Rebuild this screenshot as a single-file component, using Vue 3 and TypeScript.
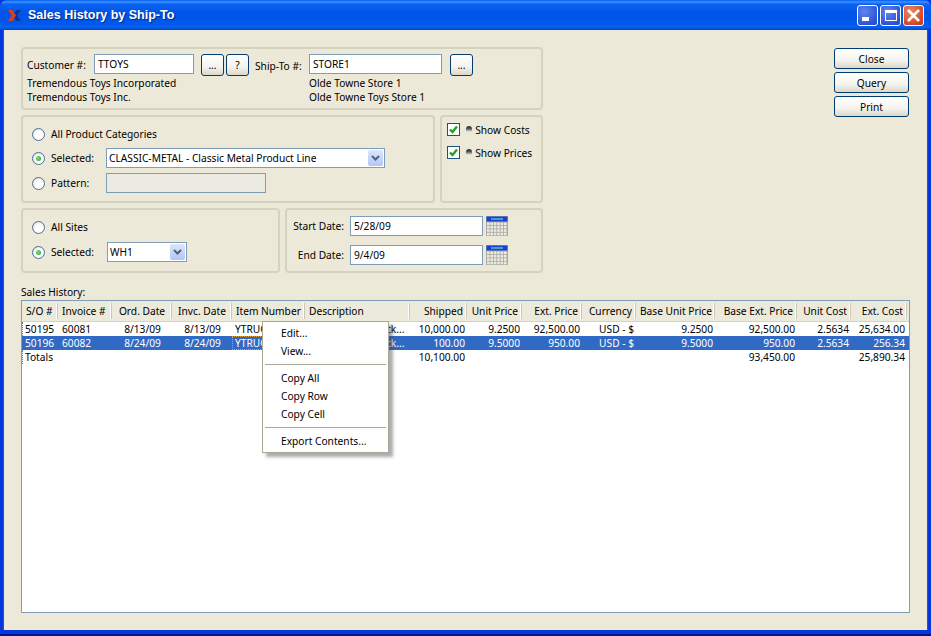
<script setup lang="ts">
interface Col { label: string; width: number; align: 'left' | 'right' | 'center' }
const cols: Col[] = [
  { label: 'S/O #', width: 36, align: 'left' },
  { label: 'Invoice #', width: 54, align: 'left' },
  { label: 'Ord. Date', width: 60, align: 'center' },
  { label: 'Invc. Date', width: 60, align: 'center' },
  { label: 'Item Number', width: 73, align: 'left' },
  { label: 'Description', width: 105, align: 'left' },
  { label: 'Shipped', width: 57, align: 'right' },
  { label: 'Unit Price', width: 55, align: 'right' },
  { label: 'Ext. Price', width: 60, align: 'right' },
  { label: 'Currency', width: 54, align: 'right' },
  { label: 'Base Unit Price', width: 79, align: 'right' },
  { label: 'Base Ext. Price', width: 82, align: 'right' },
  { label: 'Unit Cost', width: 54, align: 'right' },
  { label: 'Ext. Cost', width: 56, align: 'right' },
]
const desc = 'Tough Metal Truck...'
const rows: { cells: string[]; selected: boolean }[] = [
  { selected: false, cells: ['50195', '60081', '8/13/09', '8/13/09', 'YTRUCK1', desc, '10,000.00', '9.2500', '92,500.00', 'USD - $', '9.2500', '92,500.00', '2.5634', '25,634.00'] },
  { selected: true, cells: ['50196', '60082', '8/24/09', '8/24/09', 'YTRUCK1', desc, '100.00', '9.5000', '950.00', 'USD - $', '9.5000', '950.00', '2.5634', '256.34'] },
  { selected: false, cells: ['Totals', '', '', '', '', '', '10,100.00', '', '', '', '', '93,450.00', '', '25,890.34'] },
]
const gridColumns = cols.map((c) => c.width + 'px').join(' ')
const calCells: { x: number; y: number }[] = []
for (let r = 0; r < 4; r++) for (let c = 0; c < 6; c++) calCells.push({ x: 1 + c * 3.4, y: 6.500 + r * 3.4 })
</script>

<template>
  <div class="window">
    <header class="titlebar">
      <svg class="logo" width="13" height="11" viewBox="0 0 13 11">
        <path d="M13 0H8.500L6 3.500 7.800 5.500 6 7.500 8.500 11H13L9 5.500z" fill="#0f2f9a" />
        <path d="M0 0h4.500L8 5.500 4.500 11H0l3.500-5.500z" fill="#d8401c" />
      </svg>
      <span class="title">Sales History by Ship-To</span>
      <div class="winbtns">
        <span class="wb wb-blue">
          <svg width="19" height="19" viewBox="0 0 19 19"><rect x="4" y="11" width="7" height="4" fill="#fff" /></svg>
        </span>
        <span class="wb wb-blue">
          <svg width="19" height="19" viewBox="0 0 19 19"><rect x="4.500" y="4.500" width="11" height="10" fill="none" stroke="#fff" /><rect x="4" y="4" width="12" height="3" fill="#fff" /></svg>
        </span>
        <span class="wb wb-red">
          <svg width="19" height="19" viewBox="0 0 19 19"><path d="M4 4l11 11M15 4L4 15" stroke="#fff" stroke-width="2.600" /></svg>
        </span>
      </div>
    </header>

    <main class="client">
      <div class="top">
        <div class="forms">
          <section class="group customer">
            <div class="cust-col">
              <div class="cust-row">
                <label class="lbl">Customer #:</label>
                <span class="input w-cust">TTOYS</span>
                <button class="xp mini">...</button>
                <button class="xp mini">?</button>
              </div>
              <div class="info">Tremendous Toys Incorporated</div>
              <div class="info">Tremendous Toys Inc.</div>
            </div>
            <div class="cust-col ship">
              <div class="cust-row">
                <label class="lbl shipto">Ship-To #:</label>
                <span class="input w-ship">STORE1</span>
                <button class="xp mini gap">...</button>
              </div>
              <div class="info ship-info">Olde Towne Store 1</div>
              <div class="info ship-info">Olde Towne Toys Store 1</div>
            </div>
          </section>

          <div class="split">
            <section class="group cats">
              <div class="radio-row r1"><span class="radio"></span><span>All Product Categories</span></div>
              <div class="radio-row r2">
                <span class="radio on"></span><span class="rl">Selected:</span>
                <span class="combo w-cat">CLASSIC-METAL - Classic Metal Product Line
                  <span class="arrow"><svg width="9" height="6" viewBox="0 0 9 6"><path d="M1 1l3.500 3.500L8 1" fill="none" stroke="#4d6185" stroke-width="2" /></svg></span>
                </span>
              </div>
              <div class="radio-row r3">
                <span class="radio"></span><span class="rl">Pattern:</span>
                <span class="input disabled w-pat"></span>
              </div>
            </section>
            <section class="group shows">
              <div class="chk-row">
                <span class="check"><svg width="11" height="11" viewBox="0 0 11 11"><path d="M2 5.500l2.500 2.500L9 2.500" fill="none" stroke="#21a121" stroke-width="2.400" /></svg></span>
                <span class="dot"></span><span>Show Costs</span>
              </div>
              <div class="chk-row">
                <span class="check"><svg width="11" height="11" viewBox="0 0 11 11"><path d="M2 5.500l2.500 2.500L9 2.500" fill="none" stroke="#21a121" stroke-width="2.400" /></svg></span>
                <span class="dot"></span><span>Show Prices</span>
              </div>
            </section>
          </div>

          <div class="split">
            <section class="group sites">
              <div class="radio-row s1"><span class="radio"></span><span>All Sites</span></div>
              <div class="radio-row s2">
                <span class="radio on"></span><span class="rl">Selected:</span>
                <span class="combo w-site">WH1
                  <span class="arrow"><svg width="9" height="6" viewBox="0 0 9 6"><path d="M1 1l3.500 3.500L8 1" fill="none" stroke="#4d6185" stroke-width="2" /></svg></span>
                </span>
              </div>
            </section>
            <section class="group dates">
              <div class="date-row" v-for="d in [{ l: 'Start Date:', v: '5/28/09' }, { l: 'End Date:', v: '9/4/09' }]" :key="d.l">
                <label class="date-lbl">{{ d.l }}</label>
                <span class="input w-date">{{ d.v }}</span>
                <svg class="cal" width="22" height="20" viewBox="0 0 22 20">
                  <rect width="22" height="20" fill="#a9a99f" />
                  <rect x="0.500" y="0.500" width="21" height="5" fill="#1a3fd8" />
                  <rect x="5" y="2" width="12" height="2" fill="#3f9fd0" />
                  <rect v-for="(c, i) in calCells" :key="i" :x="c.x" :y="c.y" width="2.600" height="2.600" fill="#ebebe4" />
                </svg>
              </div>
            </section>
          </div>
        </div>
        <aside class="actions">
          <button class="xp act">Close</button>
          <button class="xp act">Query</button>
          <button class="xp act">Print</button>
        </aside>
      </div>

      <div class="list-label">Sales History:</div>
      <div class="list">
        <div class="thead" :style="{ gridTemplateColumns: gridColumns }">
          <div v-for="c in cols" :key="c.label" class="th" :class="'a-' + c.align">{{ c.label }}</div>
        </div>
        <div class="tbody">
          <div v-for="(r, ri) in rows" :key="ri" class="tr" :class="{ sel: r.selected }" :style="{ gridTemplateColumns: gridColumns }">
            <div v-for="(cell, i) in r.cells" :key="i" class="td" :class="['a-' + cols[i].align, { focus: ri === 1 && i === 4, first: ri !== 1 && i === 0 }]">{{ cell }}</div>
          </div>
        </div>

        <div class="menu">
          <div class="mi">Edit...</div>
          <div class="mi">View...</div>
          <div class="sep"></div>
          <div class="mi">Copy All</div>
          <div class="mi">Copy Row</div>
          <div class="mi">Copy Cell</div>
          <div class="sep"></div>
          <div class="mi">Export Contents...</div>
        </div>
      </div>
    </main>
  </div>
</template>

<style scoped>
.window {
  width: 931px;
  height: 636px;
  display: flex;
  flex-direction: column;
  background: #0836dd;
  font-family: "Noto Sans", "DejaVu Sans", sans-serif;
  font-size: 10.200px;
  color: #000;
  overflow: hidden;
  border-bottom: 2px solid #00138c;
  padding-bottom: 4px;
  box-sizing: border-box;
}
.titlebar {
  height: 30px;
  flex: none;
  display: flex;
  align-items: center;
  padding: 0 7px 0 8px;
  border-radius: 7px 7px 0 0;
  background: linear-gradient(180deg, #0058ee 0%, #3a93ff 6%, #0a63f0 14%, #0053e6 45%, #0058ee 80%, #0663ef 90%, #0043cf 100%);
}
.logo { margin-right: 7px; }
.title {
  font-family: "Liberation Sans", Arial, sans-serif;
  font-size: 12.500px;
  font-weight: 700;
  color: #fff;
  text-shadow: 1px 1px 1px #0a2a80;
}
.winbtns { margin-left: auto; display: flex; gap: 2px; }
.wb {
  width: 21px;
  height: 21px;
  border: 1px solid #fff;
  border-radius: 3px;
  display: flex;
  box-sizing: border-box;
}
.wb-blue { background: radial-gradient(circle at 35% 30%, #5f86ee, #2f55d8 70%, #2448c4); }
.wb-red { background: radial-gradient(circle at 35% 30%, #e88a68, #d4482a 70%, #b8361c); }

.client {
  flex: 1;
  margin: 0 4px;
  background: #ece9d8;
  padding: 17px 17px 17px;
  display: flex;
  flex-direction: column;
  min-height: 0;
  box-shadow: -1px 0 0 #0d56ee, 1px 0 0 #0d56ee;
}
.top { display: flex; justify-content: space-between; }
.forms { width: 522px; display: flex; flex-direction: column; gap: 5px; }
.group {
  border: 2px solid #d5d2bf;
  border-radius: 4px;
  box-sizing: border-box;
}
.customer {
  height: 63px;
  display: flex;
  padding: 5px 0 0 4px;
}
.cust-col { width: 228px; }
.cust-col.ship { flex: 1; }
.cust-row { display: flex; align-items: flex-start; height: 22px; }
.lbl { line-height: 22px; width: 67px; }
.shipto { width: 54px; line-height: 24px; }
.input {
  display: block;
  box-sizing: border-box;
  height: 20px;
  line-height: 18px;
  padding-left: 3px;
  background: #fff;
  border: 1px solid #7f9db9;
}
.w-cust { width: 100px; margin-right: 7px; }
.w-ship { width: 133px; }
.mini { width: 23px; height: 22px; margin-right: 2px; }
.mini.gap { margin-left: 8px; }
.info { line-height: 14px; }
.ship-info { padding-left: 54px; }

.xp {
  font: inherit;
  padding: 0;
  color: #000;
  border: 1px solid #003c74;
  border-radius: 3px;
  background: linear-gradient(180deg, #fff 0%, #f4f3ee 60%, #dcd8c8 100%);
  text-align: center;
}
.split { display: flex; gap: 5px; }
.cats { width: 415px; height: 88px; position: relative; padding: 0 0 0 9px; }
.shows { width: 103px; height: 88px; padding: 6px 0 0 5px; }
.sites { width: 259px; height: 65px; padding: 0 0 0 9px; }
.dates { width: 258px; height: 65px; padding: 5px 0 0 3px; }
.radio-row { display: flex; align-items: center; }
.r1 { height: 18px; margin-top: 8px; }
.r2 { height: 20px; margin-top: 5px; }
.r3 { height: 20px; margin-top: 5px; }
.s1 { height: 18px; margin-top: 8px; }
.s2 { height: 20px; margin-top: 6px; }
.radio {
  width: 13px;
  height: 13px;
  flex: none;
  box-sizing: border-box;
  border: 1px solid #4a7198;
  border-radius: 50%;
  margin-right: 6px;
  background: radial-gradient(circle at 60% 60%, #fff 40%, #dcd9cc 90%);
  position: relative;
}
.radio.on::after {
  content: "";
  position: absolute;
  left: 3px;
  top: 3px;
  width: 5px;
  height: 5px;
  border-radius: 50%;
  background: radial-gradient(circle at 40% 40%, #7fe07f, #21a121);
}
.rl { width: 55px; flex: none; }
.combo {
  display: flex;
  align-items: center;
  box-sizing: border-box;
  height: 20px;
  background: #fff;
  border: 1px solid #7f9db9;
  padding-left: 2px;
  position: relative;
  white-space: nowrap;
}
.arrow {
  position: absolute;
  right: 1px;
  top: 1px;
  width: 15px;
  height: 16px;
  border-radius: 2px;
  background: linear-gradient(180deg, #dce6fb, #b3c6f2);
  display: flex;
  align-items: center;
  justify-content: center;
}
.w-cat { width: 279px; }
.w-pat { width: 160px; }
.w-site { width: 80px; margin-left: 1px; }
.disabled { background: #ebebe4; }
.chk-row { display: flex; align-items: center; height: 13px; margin-bottom: 10px; }
.check {
  width: 13px;
  height: 13px;
  box-sizing: border-box;
  border: 1px solid #1c5180;
  background: #fff;
  flex: none;
  display: flex;
  margin-right: 6px;
}
.dot {
  width: 6px;
  height: 6px;
  border-radius: 3px 3px 0 0;
  background: linear-gradient(180deg, #2a2a2a 0%, #555 45%, #f4f4ee 100%);
  margin: 0 3px 2px 0;
  flex: none;
}
.date-row { display: flex; align-items: center; height: 22px; margin-bottom: 7px; }
.date-lbl { width: 54px; text-align: right; margin-right: 6px; white-space: nowrap; }
.w-date { width: 133px; margin-right: 3px; line-height: 18px; }
.cal { flex: none; }

.actions { display: flex; flex-direction: column; gap: 3px; padding: 1px 1px 0 0; }
.act { width: 75px; height: 21px; }

.list-label { margin-top: 11px; height: 16px; line-height: 16px; }
.list {
  flex: 1;
  position: relative;
  background: #fff;
  border: 1px solid #7f9db9;
  min-height: 0;
}
.thead {
  display: grid;
  height: 20px;
  background: #ebeadb;
  border-bottom: 1px solid #d6d2c2;
}
.th {
  padding: 0 3px 0 4px;
  white-space: nowrap;
  overflow: hidden;
  box-shadow: inset -1px 0 0 #fff;
  border-right: 1px solid #cbc7b8;
  margin: 2px 0;
  line-height: 16px;
}
.tr { display: grid; height: 14px; line-height: 14px; }
.tr.sel { background: #316ac5; color: #fff; }
.td { padding: 0 2px 0 3px; white-space: nowrap; overflow: hidden; }
.td:nth-child(2) { padding-left: 4px; }
.td.first { border-left: 1px dotted #777; padding-left: 2px; }
.td.focus { outline: 1px dotted #e0a040; outline-offset: -1px; }
.a-left { text-align: left; }
.a-right { text-align: right; }
.a-center { text-align: center; }

.menu {
  position: absolute;
  left: 240px;
  top: 20px;
  width: 127px;
  box-sizing: border-box;
  background: #fff;
  border: 1px solid #aca899;
  padding: 2px 2px;
  box-shadow: 4px 4px 3px rgba(70, 70, 70, 0.45);
}
.mi { height: 18px; line-height: 18px; padding-left: 16px; }
.sep { height: 1px; background: #aca899; margin: 4px 0 4px; }
</style>
